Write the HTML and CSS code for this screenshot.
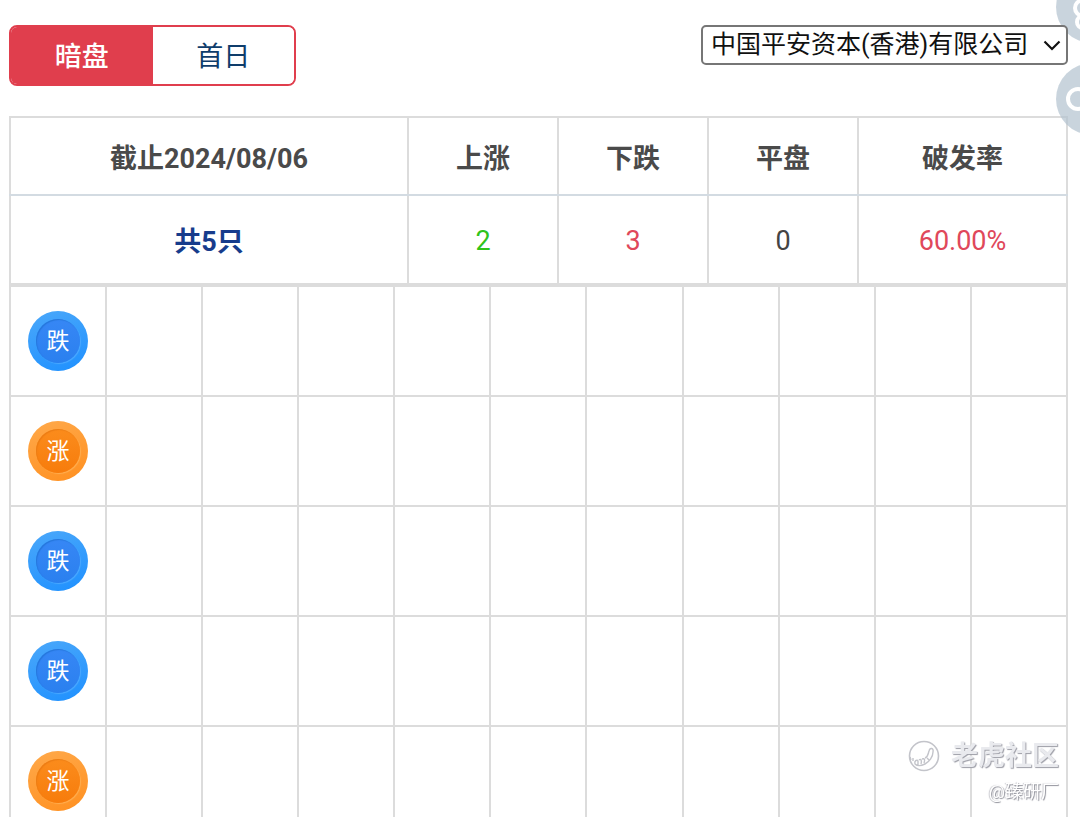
FILE: index.html
```html
<!DOCTYPE html>
<html lang="zh-CN">
<head>
    <meta charset="UTF-8">
    <meta name="viewport" content="width=device-width, initial-scale=1.0">
    <title>暗盘 / 首日</title>
    <link rel="stylesheet" href="styles.css">
</head>
<body>
    <main>
        <div class="toolbar">
            <div class="tabs">
                <button type="button" class="tab active">暗盘</button>
                <button type="button" class="tab">首日</button>
            </div>
            <div class="sponsor">
                <select id="sponsor" aria-label="保荐人">
                    <option>中国平安资本(香港)有限公司</option>
                </select>
                <svg class="chevron" viewBox="0 0 18 12" aria-hidden="true">
                    <path d="M1.5 1.5 L9 9 L16.5 1.5" fill="none" stroke="#111" stroke-width="2.2"/>
                </svg>
            </div>
        </div>

        <table class="summary">
            <colgroup>
                <col class="col-date">
                <col class="col-count">
                <col class="col-count">
                <col class="col-count">
                <col class="col-rate">
            </colgroup>
            <thead>
                <tr>
                    <th>截止2024/08/06</th>
                    <th>上涨</th>
                    <th>下跌</th>
                    <th>平盘</th>
                    <th>破发率</th>
                </tr>
            </thead>
            <tbody>
                <tr>
                    <td class="total">共5只</td>
                    <td class="number up">2</td>
                    <td class="number down">3</td>
                    <td class="number">0</td>
                    <td class="number down">60.00%</td>
                </tr>
            </tbody>
        </table>

        <table class="road">
            <tbody id="road"></tbody>
        </table>
    </main>

    <div class="float-menu" aria-hidden="true">
        <svg viewBox="0 0 72 72">
            <circle cx="36" cy="36" r="36" fill="#b4c3d0" fill-opacity="0.72"/>
            <circle cx="27" cy="37" r="8" fill="none" stroke="#fff" stroke-width="4"/>
            <circle cx="27" cy="51" r="6" fill="none" stroke="#fff" stroke-width="4"/>
        </svg>
        <svg viewBox="0 0 72 72">
            <circle cx="36" cy="36" r="36" fill="#b4c3d0" fill-opacity="0.72"/>
            <circle cx="22" cy="36" r="10" fill="none" stroke="#fff" stroke-width="4"/>
        </svg>
    </div>

    <div class="watermark">
        <div class="brand">
            <svg viewBox="0 0 32 32" aria-hidden="true">
                <circle cx="16" cy="16" r="14.5" fill="none" stroke="#c3c4ca" stroke-width="1.6"/>
                <path d="M2 17 L3 20 M5 18 L5 21 M7 24 C6 21 9 19 10 21 L10 25 M11 20 C13 18 14 21 13 24 M14 19 C17 18 17 20 16 23 M17 18 C20 17 20 14 21 11 C22 7 26 8 25 12 C25 17 21 22 17 24 C13 26 9 26 7 24 M19 18 L21 20" fill="none" stroke="#c3c4ca" stroke-width="1.4"/>
            </svg>
            <span>老虎社区</span>
        </div>
        <div class="author">@臻研厂</div>
    </div>

    <script>
        const results = ['跌', '涨', '跌', '跌', '涨'];
        const columns = 11;
        const road = document.getElementById('road');

        results.forEach((result) => {
            const row = road.insertRow();
            for (let i = 0; i < columns; i++) {
                row.insertCell();
            }
            const type = result === '涨' ? 'rise' : 'fall';
            row.cells[0].innerHTML = `<span class="badge ${type}"><span>${result}</span></span>`;
        });
    </script>
</body>
</html>
```
FILE: styles.css
```css
* {
    box-sizing: border-box;
}

html {
    overflow-x: hidden;
    scrollbar-width: none;
}

body {
    margin: 0;
    background: #fff;
    color: #444;
    font-family: Roboto, "Noto Sans CJK SC", sans-serif;
    font-size: 27px;
}

main {
    padding: 25px 12px 0 9px;
}

.toolbar {
    display: flex;
    justify-content: space-between;
    align-items: flex-start;
    margin-bottom: 30px;
}

.tabs {
    display: flex;
    width: 287px;
    height: 61px;
    border: 2px solid #e03e4d;
    border-radius: 8px;
    overflow: hidden;
}

.tab {
    flex: 1;
    padding: 0 0 2px;
    border: none;
    background: #fff;
    color: #0f3d6b;
    font: inherit;
    cursor: pointer;
}

.tab.active {
    background: #e03e4d;
    color: #fff;
    font-weight: 500;
}

.sponsor {
    position: relative;
    z-index: 1;
}

.sponsor select {
    appearance: none;
    display: block;
    width: 367px;
    height: 40px;
    padding: 0 8px;
    border: 2px solid #767676;
    border-radius: 5px;
    background: #fff;
    color: #111;
    font: inherit;
    font-size: 25px;
    line-height: 36px;
}

.chevron {
    position: absolute;
    right: 7px;
    top: 15px;
    width: 18px;
    height: 12px;
    pointer-events: none;
}

table {
    width: 100%;
    border-collapse: collapse;
    table-layout: fixed;
}

th, td {
    padding: 0;
    border: 2px solid #dcdcdc;
    text-align: center;
}

.col-date {
    width: 398px;
}

.col-count {
    width: 150px;
}

.summary th {
    height: 78px;
    border-bottom-color: #d3dbe2;
    color: #4a4a4a;
}

.summary td {
    height: 89px;
}

.summary .total {
    color: #173c8c;
    font-weight: bold;
}

.summary .number {
    padding-top: 2px;
}

.summary .up {
    color: #2fc31b;
}

.summary .down {
    color: #e0485a;
}

.road td {
    height: 110px;
}

.badge {
    display: flex;
    align-items: center;
    justify-content: center;
    width: 60px;
    height: 60px;
    margin: 0 auto;
    border-radius: 50%;
    color: #fff;
    font-size: 23px;
}

.badge span {
    width: 44px;
    height: 44px;
    border-radius: 50%;
    line-height: 46px;
}

.fall {
    background: linear-gradient(160deg, #4ba8fa, #1e90ff);
}

.fall span {
    background: linear-gradient(#3787f5, #2a80ef);
    box-shadow: inset 1px 1px 1px #2577dc, 1px 1px 1px #4ba9ff;
}

.rise {
    background: linear-gradient(160deg, #ffa94a, #ff9020);
}

.rise span {
    background: linear-gradient(#fb8c1c, #f77c0c);
    box-shadow: inset 1px 1px 1px #ec7d14, 1px 1px 1px #ffae50;
}

/* round shortcuts half hidden behind the right edge */
.float-menu {
    position: fixed;
    top: -29px;
    right: -48px;
    display: flex;
    flex-direction: column;
    gap: 20px;
}

.float-menu svg {
    width: 72px;
    height: 72px;
}

.watermark {
    position: fixed;
    right: 21px;
    bottom: 10px;
    color: #fff;
    text-align: right;
    text-shadow: 1px 1px 1px #8f9099, -1px 0 1px #c8c8ce;
}

.brand {
    display: flex;
    align-items: center;
    gap: 11px;
    color: #e9eaee;
    font-weight: bold;
    line-height: 42px;
    text-shadow: 1px 1px 1px #9c9da6;
}

.brand svg {
    width: 32px;
    height: 32px;
}

.author {
    font-size: 18px;
    line-height: 30px;
}
```
